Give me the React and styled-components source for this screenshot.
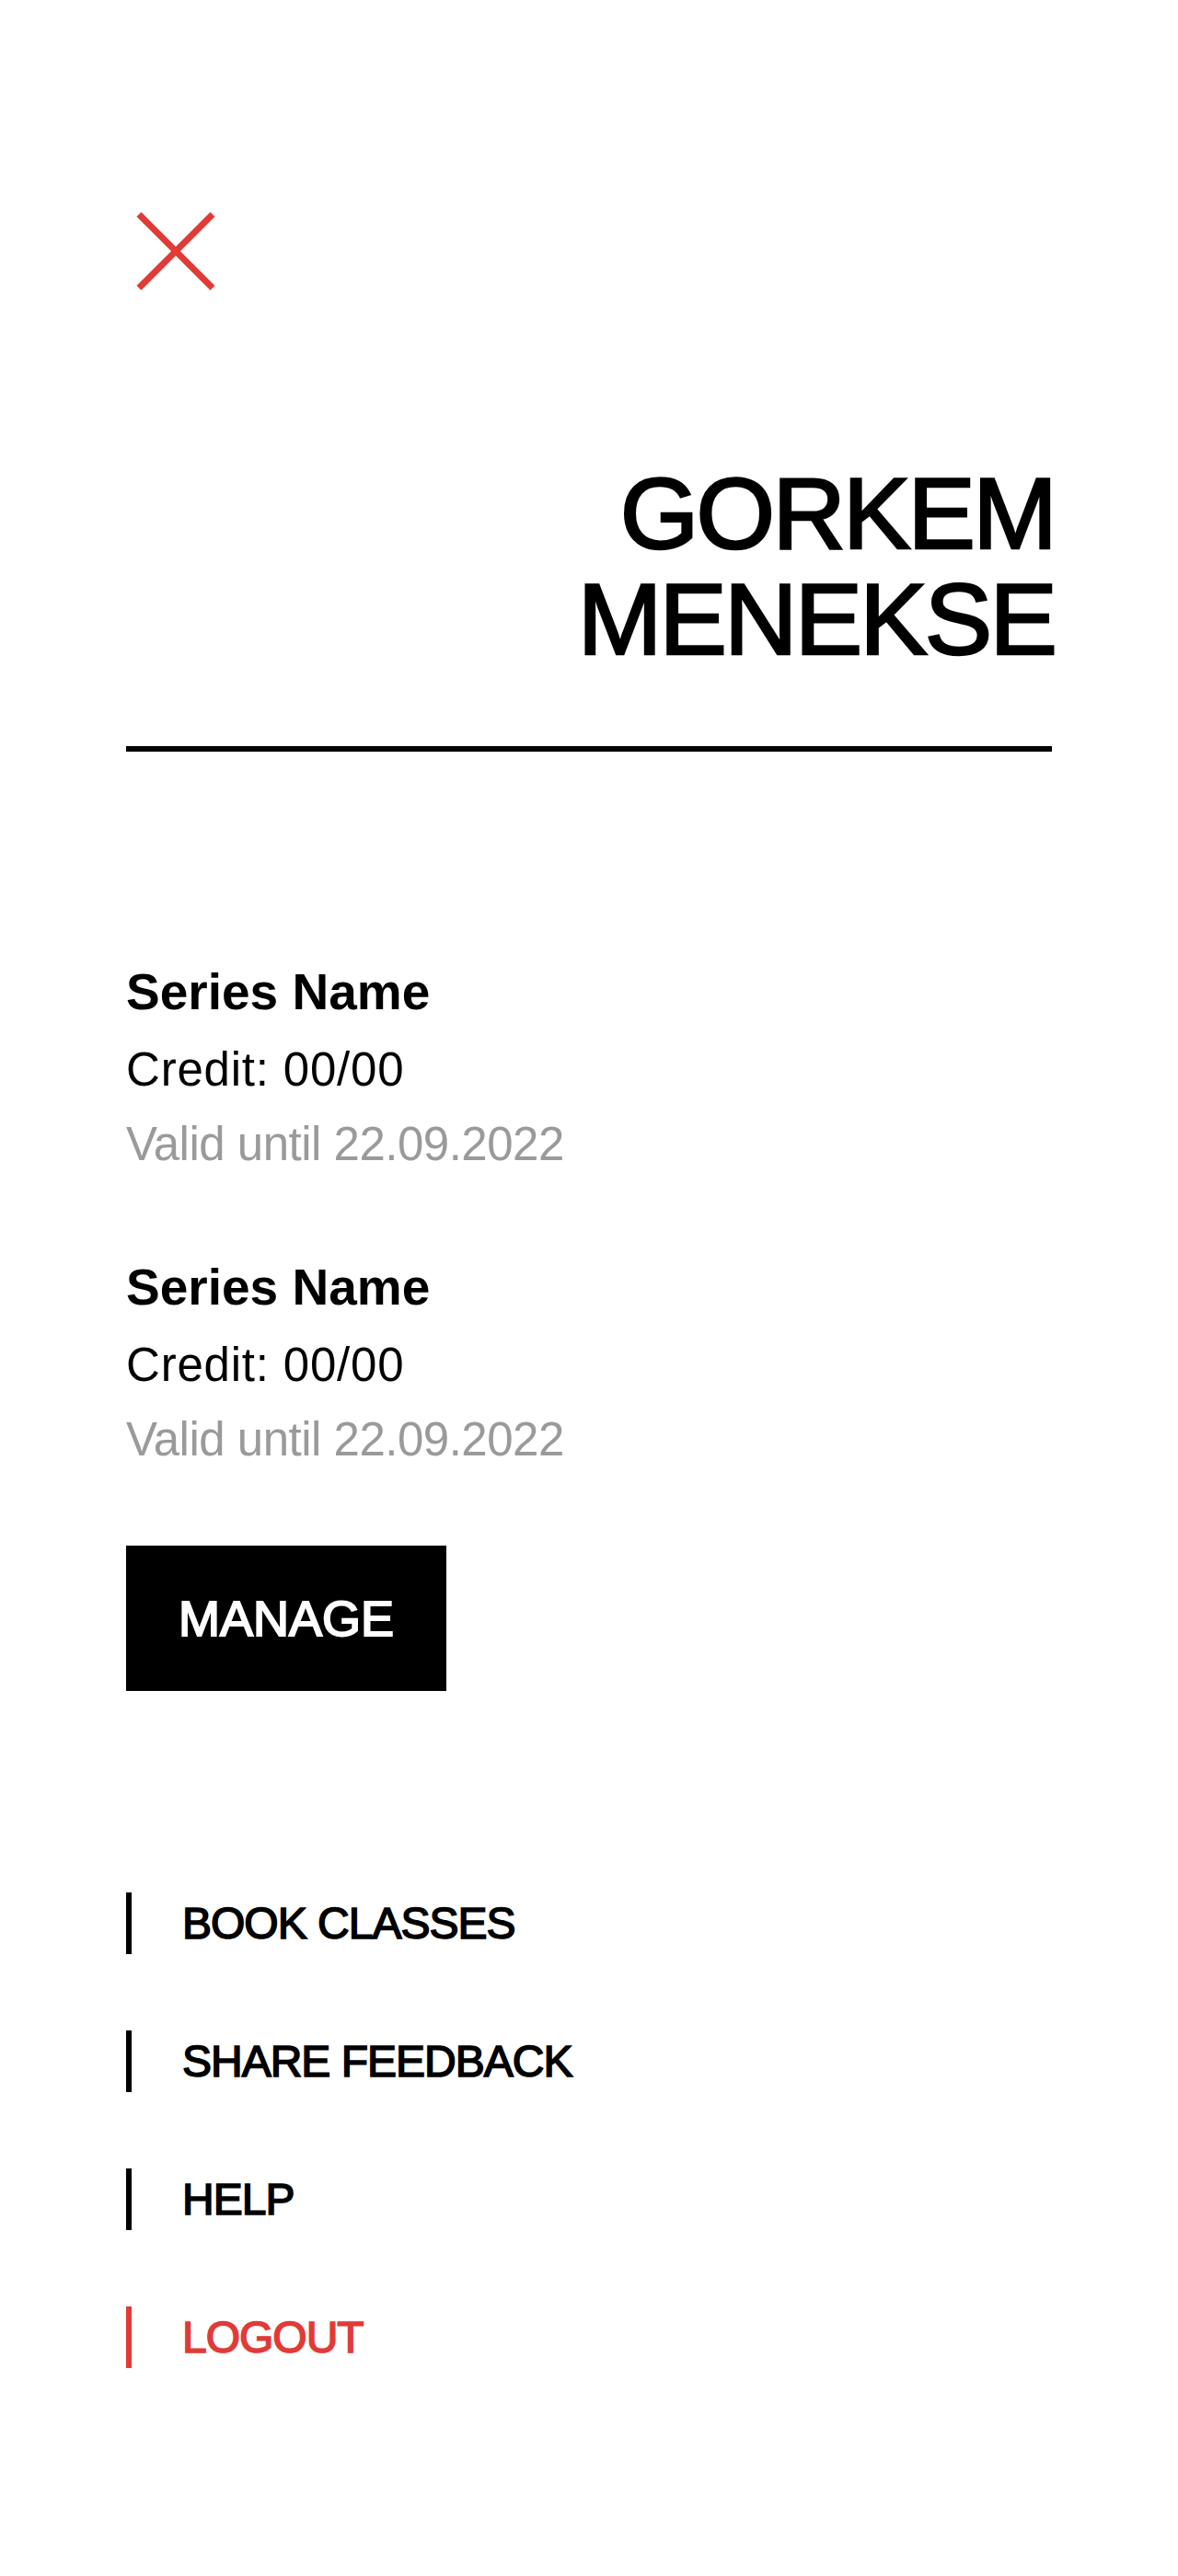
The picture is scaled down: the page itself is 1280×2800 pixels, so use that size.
import React from "react";
import styled, { createGlobalStyle } from "styled-components";

const GlobalStyle = createGlobalStyle`
  html, body {
    margin: 0;
    padding: 0;
    background: #ffffff;
  }
  body {
    font-family: "Liberation Sans", Arial, Helvetica, sans-serif;
    color: #000;
  }
  * { box-sizing: border-box; }
`;

const RED = "#e13a37";

const Page = styled.div`
  display: flex;
  flex-direction: column;
  padding: 230px 137px 220px;
  min-height: 2800px;
`;

const CloseButton = styled.button`
  align-self: flex-start;
  width: 86px;
  height: 86px;
  margin-left: 11px;
  padding: 0;
  border: none;
  background: transparent;
  cursor: pointer;
  display: block;
  svg { display: block; }
`;

const Name = styled.h1`
  margin: 184px -3px 0 0;
  font-size: 110px;
  line-height: 115px;
  font-weight: 400;
  letter-spacing: -2.8px;
  text-align: right;
  -webkit-text-stroke: 2.6px #000;
`;

const Divider = styled.hr`
  margin: 81px 0 0;
  border: none;
  height: 6px;
  background: #000;
`;

const SeriesList = styled.div`
  display: flex;
  flex-direction: column;
  gap: 75px;
  margin-top: 221px;
`;

const SeriesBlock = styled.div`
  display: flex;
  flex-direction: column;
`;

const SeriesTitle = styled.div`
  font-size: 55px;
  line-height: 81px;
  font-weight: 700;
  margin-bottom: 3px;
`;

const SeriesLine = styled.div`
  font-size: 51px;
  line-height: 81px;
  font-weight: 400;
  color: ${(p) => (p.$muted ? "#9a9a9a" : "#000")};
  letter-spacing: ${(p) => (p.$muted ? "-0.5px" : "0.8px")};
`;

const ManageButton = styled.button`
  align-self: flex-start;
  margin-top: 75px;
  height: 158px;
  padding: 0 57px;
  border: none;
  background: #000;
  color: #fff;
  font-family: inherit;
  font-size: 54px;
  font-weight: 400;
  letter-spacing: 0;
  -webkit-text-stroke: 2px #fff;
  display: inline-flex;
  align-items: center;
  cursor: pointer;
`;

const Menu = styled.nav`
  display: flex;
  flex-direction: column;
  gap: 83px;
  margin-top: 219px;
`;

const MenuItem = styled.a`
  display: flex;
  align-items: center;
  gap: 55px;
  height: 67px;
  color: ${(p) => (p.$danger ? RED : "#000")};
  text-decoration: none;
  font-size: 48px;
  line-height: 48px;
  font-weight: 400;
  letter-spacing: -1px;
  -webkit-text-stroke: 1.6px ${(p) => (p.$danger ? RED : "#000")};
`;

const MenuBar = styled.span`
  width: 6px;
  height: 67px;
  background: currentColor;
  flex: none;
`;

const CloseIcon = () => (
  <svg width="86" height="86" viewBox="0 0 86 86" fill="none">
    <line x1="3" y1="3" x2="83" y2="83" stroke={RED} strokeWidth="7" />
    <line x1="83" y1="3" x2="3" y2="83" stroke={RED} strokeWidth="7" />
  </svg>
);

const series = [
  { name: "Series Name", credit: "Credit: 00/00", valid: "Valid until 22.09.2022" },
  { name: "Series Name", credit: "Credit: 00/00", valid: "Valid until 22.09.2022" },
];

const menu = [
  { label: "BOOK CLASSES" },
  { label: "SHARE FEEDBACK" },
  { label: "HELP" },
  { label: "LOGOUT", danger: true },
];

export default function App() {
  return (
    <>
      <GlobalStyle />
      <Page>
        <CloseButton aria-label="Close">
          <CloseIcon />
        </CloseButton>
        <Name>
          GORKEM
          <br />
          MENEKSE
        </Name>
        <Divider />
        <SeriesList>
          {series.map((s, i) => (
            <SeriesBlock key={i}>
              <SeriesTitle>{s.name}</SeriesTitle>
              <SeriesLine>{s.credit}</SeriesLine>
              <SeriesLine $muted>{s.valid}</SeriesLine>
            </SeriesBlock>
          ))}
        </SeriesList>
        <ManageButton>MANAGE</ManageButton>
        <Menu>
          {menu.map((m) => (
            <MenuItem key={m.label} href="#" $danger={m.danger}>
              <MenuBar />
              {m.label}
            </MenuItem>
          ))}
        </Menu>
      </Page>
    </>
  );
}
